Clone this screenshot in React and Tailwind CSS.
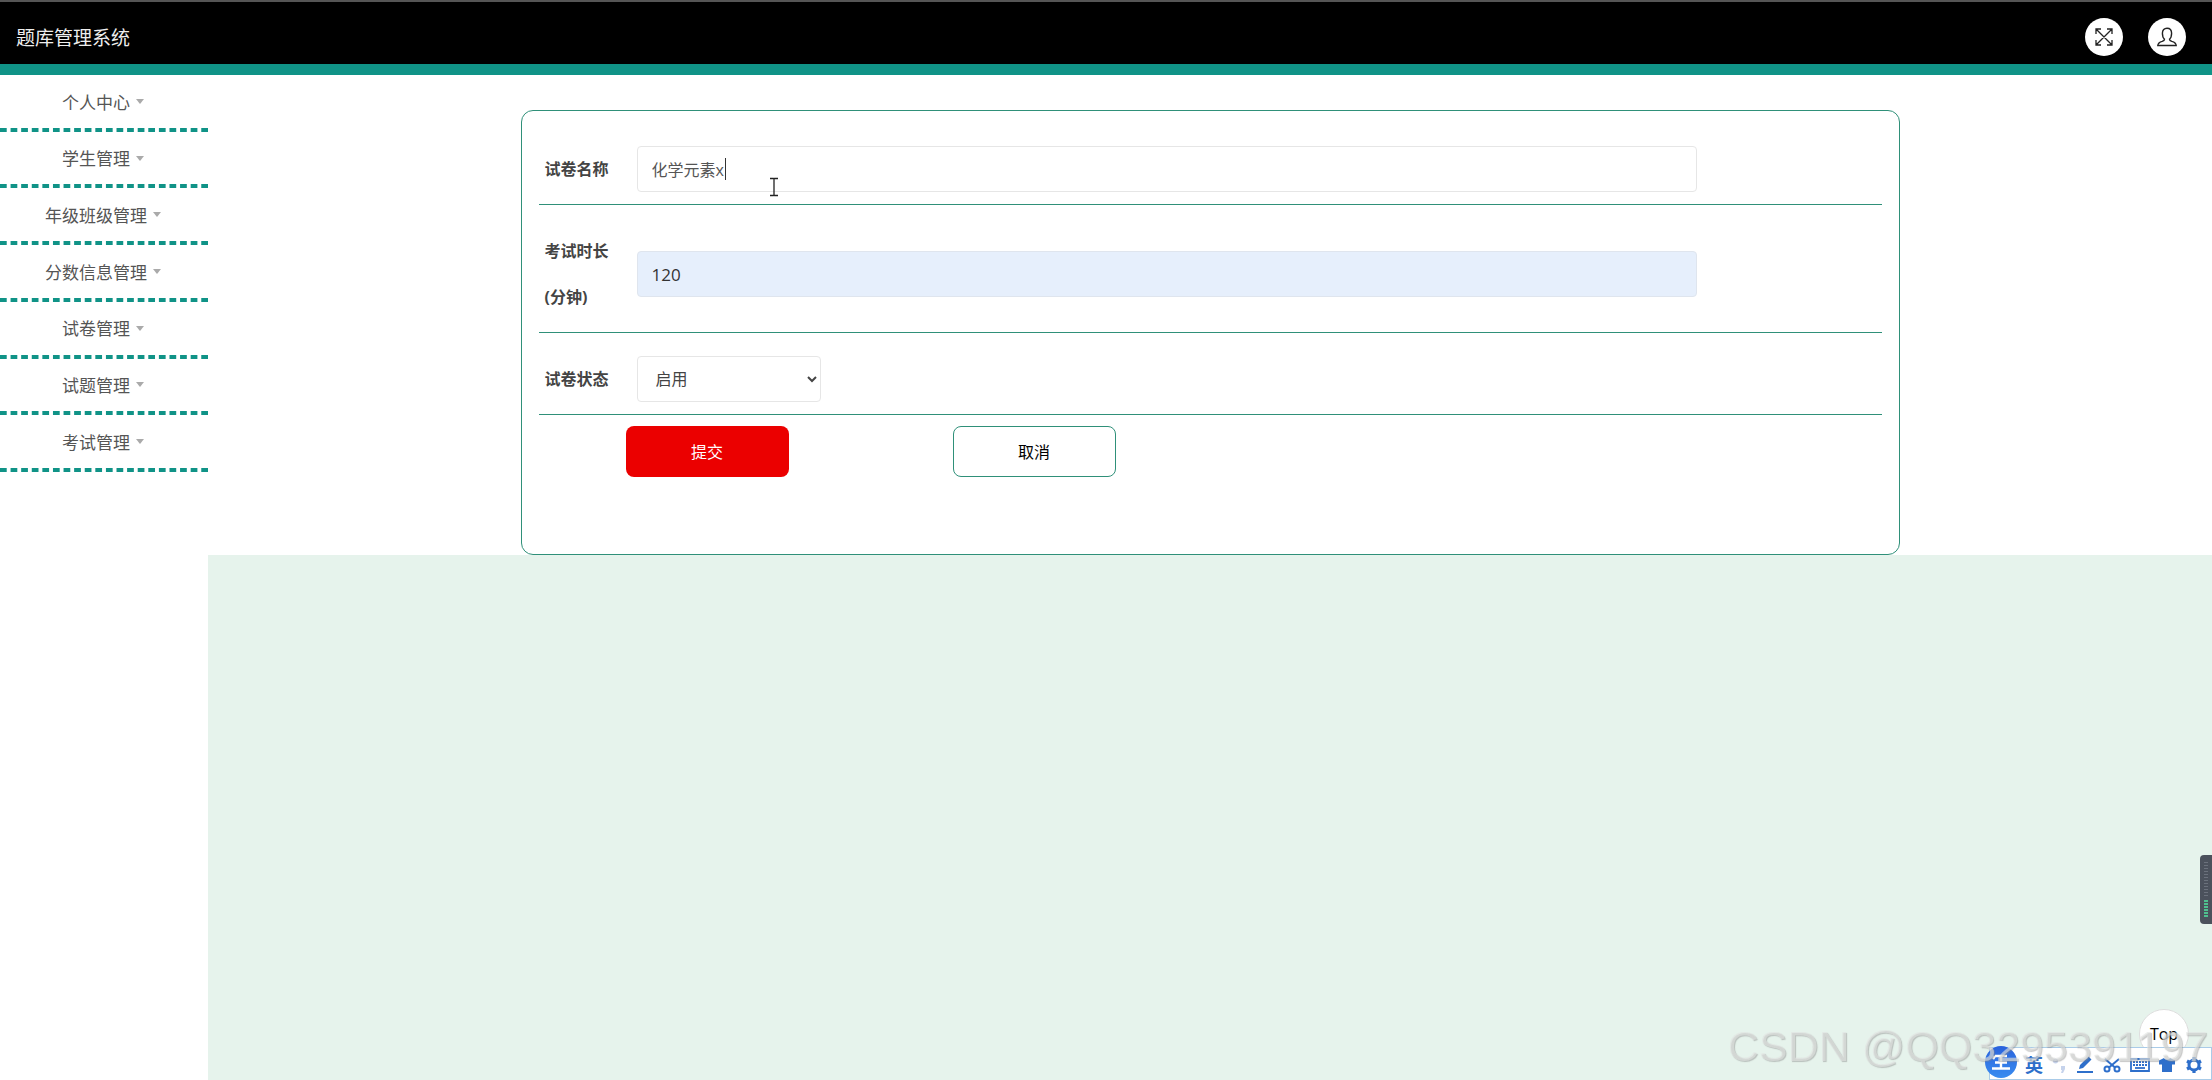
import React, { useState } from "react";

const menus = ["个人中心", "学生管理", "年级班级管理", "分数信息管理", "试卷管理", "试题管理", "考试管理"];

const Header = () => {
  return (
    <header className="flex h-[75px] items-center justify-between border-t-2 border-b-11 border-t-[#555] border-b-[#109387] bg-black pl-4 pr-[26px]">
      <h1 className="pt-[10px] text-[19px] leading-6 text-[#eee]">题库管理系统</h1>

      <div className="flex gap-[25px] pt-[8px]">
        <button aria-label="全屏" className="flex size-[38px] items-center justify-center rounded-full bg-white">
          <svg width="20" height="20" viewBox="0 0 20 20" fill="none" stroke="#222" strokeWidth="1.3">
            <path d="M2 2l16 16M18 2L2 18M2 7V2h5M13 2h5v5M18 13v5h-5M7 18H2v-5" />
          </svg>
        </button>
        <button aria-label="用户" className="flex size-[38px] items-center justify-center rounded-full bg-white">
          <svg width="20" height="20" viewBox="0 0 20 20" fill="none" stroke="#222" strokeWidth="1.4">
            <path d="M7.500 12.200C6 11 5.400 9 5.400 6.300 5.400 3.200 7.300 1.200 10 1.200s4.600 2 4.600 5.100c0 2.700-.6 4.700-2.100 5.900 0 1.300.8 1.700 2.300 2.200 2.900.8 4.200 1.600 4.400 4.100H.8c.2-2.500 1.500-3.300 4.400-4.100 1.500-.5 2.300-.9 2.300-2.200z" />
          </svg>
        </button>
      </div>
    </header>
  );
};

const Sidebar = () => {
  return (
    <nav className="w-[208px] shrink-0 bg-white">
      <ul className="grid h-[397px] grid-rows-7">
        {menus.map((name) => (
          <li
            key={name}
            className="bg-[linear-gradient(to_right,transparent_32%,#109387_32%)] bg-[length:5.1%_4px] bg-right-bottom bg-repeat-x"
          >
            <a href="#" className="flex h-full items-center justify-center gap-[6px] pr-[2px] pb-[2px] text-[17px] text-[#555]">
              {name}
              <span className="mb-[2px] border-x-4 border-t-5 border-x-transparent border-t-[#aaa]"></span>
            </a>
          </li>
        ))}
      </ul>
    </nav>
  );
};

const Row = ({ id, label, children }) => {
  return (
    <div className="flex items-center border-b border-[#2f9079] pt-[23px] pb-[12px]">
      <label htmlFor={id} className="w-[98px] shrink-0 pl-[6px] pr-[20px] text-[16px] leading-[46px] font-bold text-[#444]">
        {label}
      </label>
      {children}
    </div>
  );
};

const PaperForm = () => {
  const [name, setName] = useState("化学元素x");
  const [time, setTime] = useState("120");

  return (
    <form className="mx-auto w-[1379px] max-w-[69%] rounded-xl border border-[#2f9079] bg-white px-[17px] pt-[12px] pb-[77px]">
      <Row id="name" label="试卷名称">
        <div className="relative w-[79%]">
          <input
            id="name"
            value={name}
            onChange={(e) => setName(e.target.value)}
            className="h-[46px] w-full rounded-sm border border-[#e6e6e6] px-[14px] text-[16px] text-[#555] outline-none"
          />
          {/* text caret and mouse pointer */}
          <span className="absolute top-[12px] left-[88px] h-[22px] w-px bg-[#333]"></span>
          <svg className="absolute top-[31px] left-[132px]" width="10" height="20" fill="none" stroke="#222" strokeWidth="1.3">
            <path d="M1 1.500h3.500l.5.500.500-.5H9M5 2v16M1 18.500h3.500l.5-.5.500.500H9" />
          </svg>
        </div>
      </Row>

      <Row id="time" label="考试时长(分钟)">
        <input
          id="time"
          value={time}
          onChange={(e) => setTime(e.target.value)}
          className="h-[46px] w-[79%] rounded-sm border border-[#dfe5ee] bg-[#e6effc] px-[14px] text-[17px] text-[#333] outline-none"
        />
      </Row>

      <Row id="status" label="试卷状态">
        <select id="status" className="h-[46px] w-[184px] rounded-sm border border-[#e6e6e6] bg-white px-[14px] text-[16px] text-[#444]">
          <option>启用</option>
          <option>禁用</option>
        </select>
      </Row>

      <div className="flex gap-[164px] pt-[11px] pl-[87px]">
        <button type="button" className="h-[51px] w-[163px] rounded-lg bg-[#eb0000] text-[16px] text-white">
          提交
        </button>
        <button type="button" className="h-[51px] w-[163px] rounded-lg border border-[#2f9079] bg-white text-[16px] text-black">
          取消
        </button>
      </div>
    </form>
  );
};

const InputBar = () => {
  return (
    <div className="fixed right-0 bottom-0 flex h-[33px] w-[223px] items-center border border-[#a9cbe8] bg-white text-[#2e6fcb]">
      <span className="absolute -top-[2px] -left-[5px] flex size-[32px] items-center justify-center rounded-full bg-linear-to-b from-[#2a62dc] to-[#3a8cf0]">
        <svg width="20" height="20" viewBox="0 0 20 20" fill="none" stroke="#fff" strokeWidth="2.400">
          <path d="M4 4h12M4 10.500h12M1 16.500h18M10 3v13M4 4L2 7" />
        </svg>
      </span>
      <div className="flex w-full items-center justify-between pt-[3px] pr-[8px] pl-[35px]">
        <span className="text-[18px] leading-5 font-bold">英</span>
        <svg width="16" height="18" viewBox="0 0 16 18" fill="#c6d3ec">
          <circle cx="3.500" cy="5" r="2.500" />
          <path d="M9 10h4v3l-2 4H9l1-3H9z" />
        </svg>
        <svg width="18" height="18" viewBox="0 0 18 18" fill="currentColor">
          <path d="M3 13l1-4 8.500-8.500 3 3L7 12zM1 15h16v2H1z" />
        </svg>
        <svg width="18" height="18" viewBox="0 0 18 18" fill="none" stroke="currentColor" strokeWidth="2">
          <circle cx="4" cy="13" r="2.500" />
          <circle cx="14" cy="13" r="2.500" />
          <path d="M2 3l10 8.500M16 3L6 11.500" />
        </svg>
        <svg width="20" height="18" viewBox="0 0 20 18" fill="none" stroke="currentColor" strokeWidth="1.800">
          <path d="M1 3h18v12H1z" />
          <path d="M3 6h14M3 9h14" strokeDasharray="2 1" />
          <path d="M5 12h10" />
        </svg>
        <svg width="18" height="18" viewBox="0 0 18 18" fill="currentColor">
          <path d="M6 2c1 2 5 2 6 0l5 2.500v4h-3V16H4V8.500H1v-4z" />
        </svg>
        <svg width="18" height="18" viewBox="0 0 18 18" fill="none" stroke="currentColor">
          <circle cx="9" cy="9" r="5" strokeWidth="3" />
          <path d="M9 1v3M9 14v3M2 5l2.600 1.500M13.400 11.500L16 13M2 13l2.600-1.500M13.400 6.500L16 5" strokeWidth="3.200" />
        </svg>
      </div>
    </div>
  );
};

const App = () => {
  return (
    <div className="flex min-h-screen flex-col bg-white font-['Open_Sans','Noto_Sans_CJK_SC',sans-serif]">
      <Header />

      <div className="flex grow">
        <Sidebar />
        <main className="grow bg-[#e6f3ec]">
          <div className="bg-white pt-[35px]">
            <PaperForm />
          </div>
        </main>
      </div>

      {/* Volume strip on the right edge */}
      <div className="fixed right-0 bottom-[156px] flex h-[69px] w-[12px] flex-col justify-between rounded-l-sm bg-[#4b515c] px-[4px] py-[7px]">
        <div className="h-[34px] bg-[repeating-linear-gradient(#6b717c_0_1px,#4b515c_1px_3px)]"></div>
        <div className="h-[17px] bg-[repeating-linear-gradient(#4fc08f_0_2px,#4b515c_2px_3px)]"></div>
      </div>

      <button className="fixed right-[23px] bottom-[21px] size-[50px] rounded-full border border-[#ddd] bg-white text-[16px] text-black">Top</button>
      <InputBar />

      {/* Watermark */}
      <p className="pointer-events-none fixed right-[4px] bottom-[10px] font-['Liberation_Sans',sans-serif] text-[43px] leading-[48px] whitespace-nowrap text-[#e2e4e3]/60 [text-shadow:1px_1px_1px_#8887]">
        CSDN @QQ3295391197
      </p>
    </div>
  );
};

export default App;
